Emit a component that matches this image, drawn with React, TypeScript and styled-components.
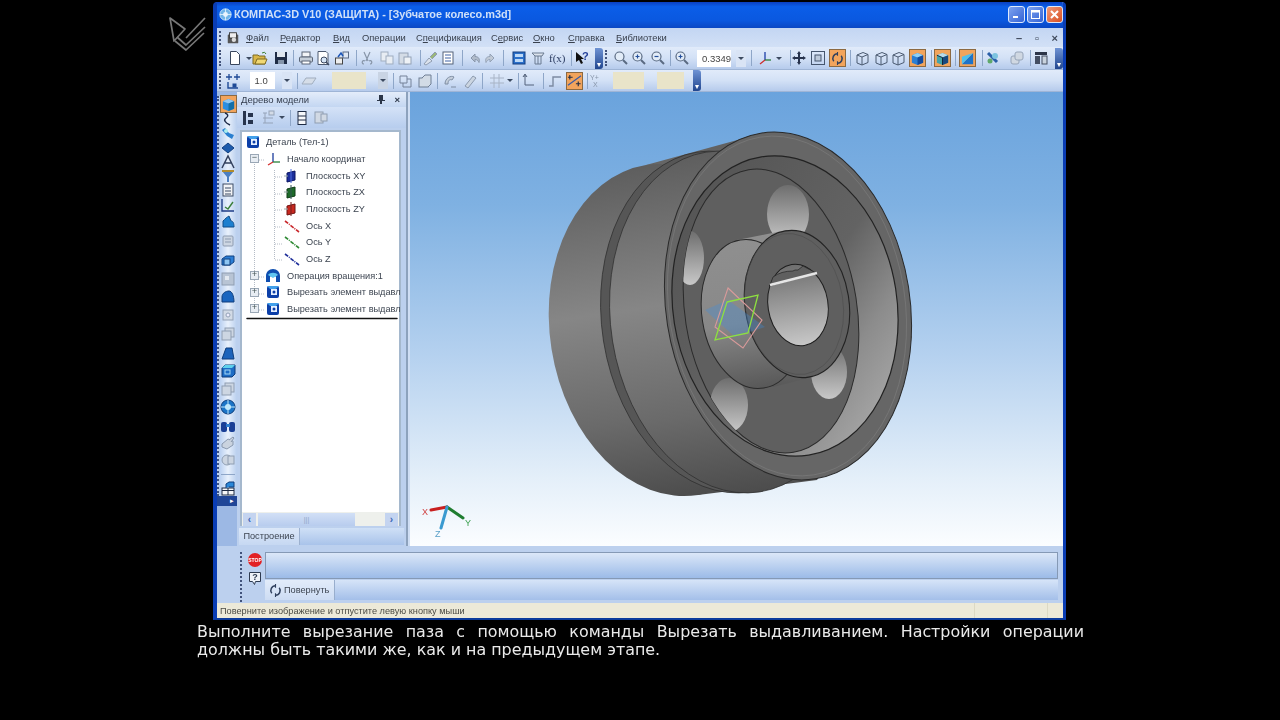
import React from 'react';
import styled, { createGlobalStyle } from 'styled-components';

const Global = createGlobalStyle`
  html, body { margin: 0; padding: 0; background: #000; overflow: hidden; }
  body { font-family: "Liberation Sans", Arial, sans-serif; }
  #root { width: 1280px; height: 720px; }
`;

const Stage = styled.div`width:1280px;height:720px;background:#000;display:flex;flex-direction:column;padding-top:2px;box-sizing:border-box;`;
const Top = styled.div`display:flex;height:618px;`;
const LogoBox = styled.div`width:213px;display:flex;justify-content:flex-end;align-items:flex-start;padding:12px 5px 0 0;box-sizing:border-box;filter:blur(.5px);`;
const Win = styled.div`width:853px;height:618px;display:flex;flex-direction:column;box-sizing:border-box;border-left:4px solid #0a3db4;border-right:3px solid #0a3db4;border-bottom:2px solid #0a3a9c;border-radius:4px 4px 0 0;overflow:hidden;background:#cfdef4;`;
const Title = styled.div`height:26px;margin:0 -3px 0 -4px;padding:0 3px 2px 6px;box-sizing:border-box;display:flex;align-items:center;background:linear-gradient(180deg,#0a3fc0 0%,#0b5ee8 18%,#0a58e0 70%,#0a47c4 100%);color:#cfe0f8;font:bold 10.9px "Liberation Sans",sans-serif;flex:none;filter:blur(.35px);`;
const TitleText = styled.span`margin-left:2px;flex:1;`;
const WinBtn = styled.div<{ $c: string }>`width:17px;height:17px;margin-left:2px;border-radius:3px;border:1px solid #dfe9fb;box-sizing:border-box;background:${p => p.$c};display:flex;align-items:center;justify-content:center;`;
const MenuBar = styled.div`height:19px;flex:none;display:flex;align-items:center;background:linear-gradient(180deg,#c3d6f3,#d2e0f6);color:#39414e;font-size:9.4px;filter:blur(.3px);`;
const Menu = styled.span<{ $w: number }>`width:${p => p.$w}px;flex:none;white-space:nowrap;`;
const MenuIcon = styled.div`width:29px;flex:none;display:flex;align-items:center;justify-content:flex-start;gap:3px;padding-left:2px;box-sizing:border-box;`;
const Mdi = styled.div`margin-left:auto;width:42px;display:flex;justify-content:space-between;padding-right:5px;font-size:11px;font-weight:bold;color:#3f4a5c;`;
const ToolRow = styled.div<{ $h: number }>`height:${p => p.$h}px;flex:none;display:flex;align-items:center;background:linear-gradient(180deg,#e1ebfa 0%,#d3e1f6 50%,#b6cbec 100%);border-bottom:1px solid #9fb5d6;box-sizing:border-box;`;
const Slot = styled.div<{ $w: number }>`width:${p => p.$w}px;flex:none;display:flex;align-items:center;justify-content:center;height:100%;filter:blur(.35px);`;
const Grip = styled.div`width:2px;height:16px;border-left:2px dotted #41527a;`;
const SmallGrip = styled.div`width:2px;height:14px;flex:none;border-left:2px dotted #41527a;`;
const Sep = styled.div`width:1px;height:16px;background:#8ea6c8;`;
const Orange = styled.div`width:17px;height:18px;background:#f2a45c;border:1px solid #8c6a42;box-sizing:border-box;display:flex;align-items:center;justify-content:center;`;
const Arrow = styled.div`width:0;height:0;border:3px solid transparent;border-top:3px solid #3c4a60;border-bottom:0;`;
const Handle = styled.div`width:8px;height:21px;background:linear-gradient(180deg,#6f93d4,#21468f);border-radius:0 3px 3px 0;display:flex;align-items:flex-end;justify-content:center;color:#fff;font-size:8px;line-height:9px;`;
const InputBox = styled.div<{ $w: number; $bg: string }>`width:${p => p.$w}px;height:17px;background:${p => p.$bg};font-size:9.5px;color:#444;display:flex;align-items:center;padding-left:5px;box-sizing:border-box;`;
const DropBtn = styled.div<{ $dim?: boolean }>`width:11px;height:17px;background:${p => (p.$dim ? '#c9d4e4' : '#d9e4f5')};display:flex;align-items:center;justify-content:center;`;

const Main = styled.div`height:454px;flex:none;display:flex;`;
const Strip = styled.div`width:20px;flex:none;display:flex;flex-direction:column;background:#9cb8e4;padding-top:4px;box-sizing:border-box;`;
const StripBody = styled.div`height:400px;background:linear-gradient(90deg,#b5cdf0,#e9f1fc 50%,#b9cfee);border-left:2px dotted #3e5180;box-sizing:border-box;display:flex;flex-direction:column;`;
const StripSlot = styled.div<{ $h: number }>`height:${p => p.$h}px;flex:none;display:flex;align-items:center;justify-content:center;filter:blur(.35px);`;
const StripSep = styled.div`width:14px;height:1px;background:#8ea6c8;`;
const StripHandle = styled.div`height:10px;background:#1f4597;color:#fff;font-size:7px;line-height:10px;text-align:right;padding-right:3px;`;
const Panel = styled.div`width:171px;flex:none;background:#bcd0ee;display:flex;flex-direction:column;border-right:2px solid #8da2bd;box-sizing:border-box;`;
const PanelHead = styled.div`height:15px;padding:0 6px 0 4px;flex:none;display:flex;align-items:center;justify-content:space-between;font-size:9.5px;color:#333d4e;background:linear-gradient(180deg,#e4edfa,#c3d6f2);filter:blur(.25px);`;
const HeadBtns = styled.div`display:flex;gap:9px;align-items:center;font-weight:bold;color:#2b3648;`;
const PanelTools = styled.div`height:21px;flex:none;display:flex;align-items:center;background:linear-gradient(180deg,#d4e2f7,#b7cdee);`;
const TreeFrame = styled.div`margin:2px 5px 0 3px;flex:none;height:396px;background:#fff;border:2px solid #a5b8cd;border-bottom:0;box-sizing:border-box;position:relative;display:flex;flex-direction:column;padding-top:2px;`;
const Guides = styled.svg`position:absolute;left:0;top:0;`;
const Row = styled.div<{ $pad: number }>`height:16.67px;flex:none;padding-left:${p => p.$pad}px;display:flex;align-items:center;font-size:9.2px;color:#3c4450;white-space:nowrap;position:relative;filter:blur(.25px);`;
const Exp = styled.div`width:9px;height:9px;flex:none;background:#e8edf3;border:1px solid #9aa7b5;box-sizing:border-box;color:#455;font:9px/6px "Liberation Mono",monospace;text-align:center;margin-right:6px;`;
const RowLabel = styled.span<{ $m: number }>`margin-left:${p => p.$m}px;`;
const TreeEnd = styled.svg`display:block;margin-left:2px;flex:none;`;
const Spacer = styled.div`flex:1;`;
const Scroll = styled.div`height:14px;flex:none;display:flex;align-items:center;background:#eef0ec;padding:0 1px;`;
const ScrollBtn = styled.div`width:13px;height:13px;background:#c4d4f0;color:#3a66b4;font:bold 10px/13px "Liberation Sans",sans-serif;text-align:center;`;
const Thumb = styled.div`width:97px;height:13px;margin-left:2px;background:linear-gradient(180deg,#d2e0f6,#b8ccee);color:#8ea4c6;font-size:7px;line-height:13px;text-align:center;`;
const TabRow = styled.div`flex:none;height:17px;margin:2px 2px 0 2px;display:flex;background:linear-gradient(180deg,#cfe0f6,#a9c3ea);`;
const Tab = styled.div`width:60px;background:linear-gradient(180deg,#dbe7f8,#c6d8f2);font-size:9.2px;color:#3c4450;line-height:16px;text-align:center;border-right:1px solid #9cb1d0;filter:blur(.2px);`;
const Canvas = styled.div`flex:1;position:relative;margin-left:2px;background:linear-gradient(180deg,#6aa3dd 0%,#7fb1e2 25%,#b5d1ef 58%,#e4eff9 85%,#fbfdff 100%);`;
const CanvasArt = styled.svg`position:absolute;inset:0;filter:blur(.4px);`;

const Command = styled.div`height:57px;flex:none;display:flex;background:#bcd0ee;padding:6px 5px 0 0;box-sizing:border-box;`;
const CmdLeft = styled.div`width:48px;flex:none;display:flex;`;
const CmdGrip = styled.div`width:2px;height:50px;border-left:2px dotted #41527a;margin-left:23px;flex:none;`;
const CmdSide = styled.div`flex:1;display:flex;flex-direction:column;align-items:center;gap:2px;filter:blur(.3px);`;
const CmdBody = styled.div`flex:1;display:flex;flex-direction:column;gap:1px;`;
const CmdField = styled.div`height:27px;flex:none;background:linear-gradient(180deg,#dbe7f8,#9cbbe8);border:1px solid #8599b5;box-sizing:border-box;`;
const CmdTabs = styled.div`height:20px;flex:none;display:flex;background:linear-gradient(180deg,#d6e4f8,#a4bfe9);`;
const CmdTab = styled.div`width:70px;display:flex;align-items:center;gap:1px;padding-left:3px;box-sizing:border-box;background:linear-gradient(180deg,#e2ecfa,#cddcf3);border-right:1px solid #98aecd;font-size:9.2px;color:#3c4450;filter:blur(.2px);`;
const Status = styled.div`height:15px;flex:none;display:flex;align-items:center;background:#ece9d8;font-size:9.2px;color:#4a4a44;padding-left:3px;filter:blur(.2px);`;
const StatusText = styled.span`flex:1;`;
const StatusCell = styled.div<{ $w: number }>`width:${p => p.$w}px;height:100%;border-left:1px solid #dcd9c4;flex:none;`;
const Caption = styled.div`margin:3px 0 0 197px;width:887px;font:15.9px/18px "DejaVu Sans",sans-serif;color:#eaeaea;filter:blur(.3px);`;
const CapLine = styled.div<{ $last?: boolean }>`height:18px;text-align:${p => (p.$last ? 'left' : 'justify')};text-align-last:${p => (p.$last ? 'left' : 'justify')};white-space:${p => (p.$last ? 'nowrap' : 'normal')};`;
const Svg = styled.svg`display:block;flex:none;`;

const cube = (a: string, b: string, c: string) => (
  <>
    <path d="M8 2l6 2.5v8L8 15 2 12.5v-8z" fill={b} />
    <path d="M8 2l6 2.5L8 7 2 4.5z" fill={a} />
    <path d="M8 7l6-2.5v8L8 15z" fill={c} />
  </>
);
const wire = <g fill="none" stroke="#4b5a70"><path d="M3 5l6-2.5 5 2v8L8 15l-5-2z" /><path d="M3 5l5 2 6-2.5M8 7v8" /></g>;
const dim = <g fill="#cdd6e2" stroke="#8d9bb0"><rect x="3" y="3" width="10" height="10" rx="1" /><path d="M5 6h6M5 9h6" fill="none" /></g>;
const part = <g><rect x="2" y="2" width="12" height="12" rx="2" fill="#0c3fa8" /><rect x="6" y="5" width="6" height="6" fill="#e6f0ff" /><circle cx="9" cy="8" r="1.5" fill="#0c3fa8" /><path d="M2 2h12L11 5H5z" fill="#42a0ea" /></g>;
const I: Record<string, React.ReactNode> = {
  menu: <g><rect x="2" y="4" width="12" height="10" rx="1" fill="#555" /><rect x="4" y="2" width="8" height="6" fill="#eee" stroke="#333" /><circle cx="9" cy="10" r="2.5" fill="#ddd" /></g>,
  doc: <path d="M3.5 1.5h6l3 3v10h-9z" fill="#fff" stroke="#39465c" />,
  open: <g><path d="M1 5h5l1 1h6v8H1z" fill="#d9b648" stroke="#7d6a22" /><path d="M3 14l2-5h10l-2 5z" fill="#f1d873" stroke="#7d6a22" /><path d="M10 3q3-2 4 1" stroke="#3a7e2f" fill="none" /></g>,
  save: <g><rect x="2" y="2" width="12" height="12" fill="#1f2c46" /><rect x="4" y="2" width="8" height="5" fill="#dfe6ef" /><rect x="5" y="10" width="6" height="4" fill="#8595ab" /></g>,
  print: <g fill="#c5ced9" stroke="#5a6576"><rect x="4" y="2" width="8" height="5" fill="#f2f4f7" /><rect x="1.5" y="7" width="13" height="5" rx="1" /><rect x="4" y="11" width="8" height="3" fill="#fff" /></g>,
  prev: <g><path d="M3 1.5h8l2 2v11H3z" fill="#fff" stroke="#4d5a70" /><circle cx="9" cy="10" r="3" fill="#d4e4f6" stroke="#3e4a60" /><path d="M11 12l3 3" stroke="#3e4a60" strokeWidth="1.5" /></g>,
  load: <g><rect x="1.5" y="8" width="7" height="6" fill="#eee" stroke="#444" /><rect x="9" y="2" width="5.5" height="6" fill="#dfe8f5" stroke="#5a6b86" /><path d="M4 7l3-4 2 3" stroke="#1c55b6" strokeWidth="1.5" fill="none" /></g>,
  cut: <path d="M5 2l4 9M11 2L7 11M5 14a1.7 1.7 0 1 1 1-3M11 14a1.7 1.7 0 1 0-1-3" fill="none" stroke="#8795a8" strokeWidth="1.2" />,
  copy: <g fill="#e8edf3" stroke="#9fadc0"><rect x="2" y="2" width="7" height="9" /><rect x="7" y="6" width="7" height="8" /></g>,
  paste: <g fill="#d4dce6" stroke="#94a2b6"><rect x="2" y="3" width="9" height="11" /><rect x="7" y="7" width="7" height="7" fill="#eef2f6" /></g>,
  brush: <g stroke="#8f9cb0" fill="#dbe2ec"><path d="M2 14l5-6 3 3-6 4z" /><path d="M8 7l5-5 2 2-5 5" fill="#9bb77a" /></g>,
  list: <g><rect x="3" y="2" width="10" height="12" fill="#fff" stroke="#55637a" /><path d="M5 5h6M5 8h6M5 11h6" stroke="#3e63a5" /></g>,
  undo: <path d="M4 8l4-4v2.5c4 0 5 3 4 6-1-2-2-3-4-3V12z" fill="#b1bccb" stroke="#8896aa" />,
  redo: <path d="M12 8L8 4v2.5c-4 0-5 3-4 6 1-2 2-3 4-3V12z" fill="#c1cad6" stroke="#94a2b6" />,
  blue: <g><rect x="2" y="2" width="12" height="12" fill="#2a6fc9" stroke="#153f80" /><rect x="4" y="4" width="8" height="3" fill="#bcd8f6" /><rect x="4" y="9" width="8" height="3" fill="#bcd8f6" /></g>,
  box: <g fill="none" stroke="#6a7a90"><path d="M2 3h12l-2 3H5z" fill="#dce4ee" /><path d="M5 6v8h6V6" /><path d="M8 6v8" /></g>,
  fx: <text x="0" y="12" fontSize="11" fill="#2a3a60" fontFamily="Liberation Serif">f(x)</text>,
  help: <g><path d="M2 2v10l3-2 2 4 2-1-2-4h3z" fill="#111" /><text x="8" y="10" fontSize="11" fontWeight="bold" fill="#24409a">?</text></g>,
  zoomA: <g fill="none" stroke="#5a6a82" strokeWidth="1.2"><circle cx="6.5" cy="6.5" r="4.5" fill="#e2ecf8" /><path d="M10 10l4 4" strokeWidth="2" /></g>,
  zoomP: <g fill="none" stroke="#5a6a82" strokeWidth="1.2"><circle cx="6.5" cy="6.5" r="4.5" fill="#e2ecf8" /><path d="M10 10l4 4" strokeWidth="2" /><path d="M4.5 6.5h4M6.5 4.5v4" stroke="#25509c" /></g>,
  zoomM: <g fill="none" stroke="#5a6a82" strokeWidth="1.2"><circle cx="6.5" cy="6.5" r="4.5" fill="#e2ecf8" /><path d="M10 10l4 4" strokeWidth="2" /><path d="M4.5 6.5h4" stroke="#25509c" /></g>,
  axes: <g fill="none" strokeWidth="1.3"><path d="M8 2v8" stroke="#1d3fa8" /><path d="M8 10h6" stroke="#2a7d38" /><path d="M8 10l-5 4" stroke="#cc2b2b" /></g>,
  move: <path d="M8 1l2 3H9v3h3V6l3 2-3 2V9H9v3h1l-2 3-2-3h1V9H4v1L1 8l3-2v1h3V4H6z" fill="#26324c" />,
  frame: <g fill="none" stroke="#46566e"><rect x="1.5" y="1.5" width="13" height="13" /><rect x="5" y="5" width="6" height="6" fill="#bcc9da" /></g>,
  rot: <g fill="none" stroke="#30405e" strokeWidth="1.6"><path d="M4 11A5 5 0 0 1 8 3" /><path d="M12 5a5 5 0 0 1-4 8" /><path d="M8 1v4M8 11v4" strokeWidth="1.2" /></g>,
  wire,
  solid: cube('#8fd0f5', '#2b7fd4', '#144a9c'),
  solid2: <g>{cube('#b9d9ea', '#45a3a8', '#19487e')}<path d="M2 4.5L8 7v8" fill="none" stroke="#123" /></g>,
  wedge: <g><path d="M2 14L14 2v12z" fill="#1e73c9" /><path d="M2 14V6l12-4z" fill="#4fc0ee" /></g>,
  sat: <g><path d="M3 3l9 9" stroke="#2a5fa8" strokeWidth="3" /><circle cx="10" cy="6" r="3" fill="#7cc3df" /><circle cx="5" cy="11" r="2.5" fill="#5fa86b" /></g>,
  gr: <g fill="#d0d8e2" stroke="#96a4b8"><rect x="2" y="6" width="8" height="8" rx="2" /><rect x="6" y="2" width="8" height="8" rx="2" /></g>,
  lib: <g><rect x="2" y="2" width="12" height="3" fill="#2c3548" /><rect x="2" y="6" width="5" height="8" fill="#444e62" /><rect x="9" y="6" width="5" height="8" fill="#c9d3de" stroke="#444e62" /></g>,
  scale: <g stroke="#1f4a96" fill="#1f4a96"><path d="M4 1v6M12 1v6M1 4h6M9 4h6" fill="none" strokeWidth="1.3" /><path d="M3 9v6h10" fill="none" strokeWidth="1.4" /><rect x="8" y="11" width="3" height="3" /></g>,
  plane: <g fill="none" stroke="#a0adbe"><path d="M1 11l4-6h10l-4 6z" fill="#d5dde8" /></g>,
  snapA: <g fill="none" stroke="#748299"><path d="M3 3h7v7H3zM10 6h4v8H6v-4" /></g>,
  snapB: <g fill="#d2dbe6" stroke="#6f7e94"><rect x="2" y="5" width="9" height="9" /><path d="M5 5l3-3h6v9l-3 3" /></g>,
  pen: <g fill="#c4cedb" stroke="#7e8da2"><path d="M3 11c0-6 6-9 9-7l-2 3c-2-1-4 0-4 4z" /><path d="M9 14h5" /></g>,
  pen2: <g fill="#cbd5e1" stroke="#8b99ad"><path d="M3 13L11 3l3 2-8 10z" /></g>,
  grid: <path d="M1 5h14M1 10h14M5 1v14M10 1v14" stroke="#a8b4c6" fill="none" />,
  axis2: <g stroke="#54637c" fill="none"><path d="M5 2v10h9" /><path d="M3 4l2-3 2 3" fill="#7f8da3" /></g>,
  step: <path d="M2 13h4V4h8" fill="none" stroke="#7d8ba2" strokeWidth="1.4" />,
  plus: <g stroke="#222d44" strokeWidth="1.2" fill="none"><path d="M1 13L15 3" stroke="#355aa8" /><path d="M3 2v5M1 4.5h5M12 9v5M9.5 11.5h5" /></g>,
  yx: <g fill="#8896aa" fontFamily="Liberation Sans" fontSize="7"><text x="1" y="7">Y+</text><text x="4" y="14">X</text></g>,
  sCube: <g>{cube('#8fc7f2', '#2a8ee0', '#126fa8')}</g>,
  curve: <path d="M5 2q5 2 1 5t4 7" fill="none" stroke="#1e2b4a" strokeWidth="1.5" />,
  sat2: <g><path d="M2 5l3-2 4 5 5 2-2 4-5-3z" fill="#2a7fd0" /><circle cx="6" cy="6" r="2" fill="#aee" /></g>,
  dia: <path d="M8 3l6 5-6 5-6-5z" fill="#1d5cad" stroke="#123f80" />,
  arch: <path d="M2 14L8 2l6 12M5 9h6" fill="none" stroke="#33415e" strokeWidth="1.5" />,
  funnel: <g><path d="M2 3h12L9 9v5L7 14V9z" fill="#4b7fc2" /><rect x="2" y="2" width="12" height="2" fill="#b28c2e" /></g>,
  page: <g><rect x="3" y="2" width="10" height="12" fill="#f2f3f5" stroke="#3d4c66" /><path d="M5 6h6M5 9h6M5 12h6" stroke="#3d4c66" /></g>,
  chk: <g stroke="#1f3d86" fill="none" strokeWidth="1.4"><path d="M2 2v12h12" /><path d="M5 10l3 2 5-7" stroke="#3a7f3a" /></g>,
  shell: <path d="M3 13V7c2-2 4-4 6-5l2 5c2 0 3 2 3 6z" fill="#1d7fcf" stroke="#114c88" />,
  dim,
  ex: <g><path d="M2 12V6l4-3h8v6l-4 3z" fill="#2b7ed6" stroke="#10407f" /><rect x="4" y="6" width="6" height="6" fill="#8ec6f3" stroke="#10407f" /></g>,
  dim2: <g><rect x="2" y="2" width="12" height="12" fill="#b8c4d4" stroke="#8f9eb2" /><rect x="5" y="5" width="4" height="4" fill="#e3e9f0" /></g>,
  dome: <g><path d="M2 13V8c0-4 4-6 7-6s5 5 5 11z" fill="#1a65bf" stroke="#0e3d7c" /></g>,
  dim3: <g><rect x="3" y="3" width="10" height="10" fill="#d3dbe6" stroke="#93a1b6" /><circle cx="8" cy="8" r="2" fill="#eef" stroke="#93a1b6" /></g>,
  dim4: <g fill="#cdd6e2" stroke="#8f9eb2"><rect x="5" y="2" width="9" height="9" /><rect x="2" y="5" width="9" height="9" /></g>,
  wedge2: <path d="M2 14l4-11h6l2 11z" fill="#1c63bb" stroke="#0e3d7c" />,
  ex2: <g><path d="M2 5l3-3h10v9l-3 3H2z" fill="#1d6cc5" stroke="#0d3b78" /><path d="M5 2h10l-3 3H2z" fill="#5fd0ec" /><rect x="5" y="7" width="5" height="4" fill="none" stroke="#a4d8f6" /></g>,
  globe: <g><circle cx="8" cy="8" r="7" fill="#1b74c7" stroke="#0e3d7c" /><circle cx="8" cy="8" r="3" fill="#bfe7fb" /><path d="M8 1v14M1 8h14" stroke="#bfe7fb" /></g>,
  logoK: <g><circle cx="8" cy="8" r="7" fill="#6fb4e8" stroke="#d7ecfb" /><circle cx="8" cy="8" r="3" fill="#e8f4fd" /><path d="M8 1v14M1 8h14" stroke="#e8f4fd" /></g>,
  bino: <g fill="#1a3f96"><rect x="1" y="4" width="6" height="10" rx="2" /><rect x="9" y="4" width="6" height="10" rx="2" /><rect x="6" y="6" width="4" height="3" fill="#2d7ed0" /></g>,
  pen3: <g fill="#cad3df" stroke="#8998ae"><path d="M2 9l6-5 5 2v4l-6 4-5-2z" /><path d="M9 5l4-3 1 1-3 4" /></g>,
  dim5: <g fill="#ccd5e1" stroke="#8f9eb2"><circle cx="7" cy="8" r="5" /><rect x="8" y="4" width="6" height="8" /></g>,
  tree: <g><rect x="2" y="7" width="12" height="7" fill="#f6f7f9" stroke="#1d2a44" /><path d="M2 9.5h12M8 7v7" stroke="#1d2a44" /><path d="M6 7V3l3-2h5v5H9" fill="#2a87d8" stroke="#0e3d7c" /></g>,
  tr: <g fill="#27344d"><rect x="3" y="1" width="3" height="14" /><rect x="8" y="3" width="5" height="4" /><rect x="8" y="10" width="5" height="4" /></g>,
  tr2: <g fill="none" stroke="#95a3b8"><path d="M3 3h4M3 8h10M3 13h10M5 3v10" /><rect x="9" y="1" width="5" height="4" fill="#d3dbe6" /></g>,
  col: <g><rect x="4" y="1.5" width="8" height="13" fill="#f6f8fb" stroke="#1e2b44" /><path d="M4 6h8M4 10h8" stroke="#1e2b44" /></g>,
  col2: <g fill="#d1d9e4" stroke="#8f9eb2"><rect x="2" y="2" width="8" height="11" /><rect x="8" y="4" width="6" height="7" /></g>,
  t0: part,
  origin: <g fill="none" strokeWidth="1.3"><path d="M8 2v9" stroke="#1b3c9c" /><path d="M8 11h7" stroke="#27803a" /><path d="M8 11l-5 3" stroke="#d22b2b" /></g>,
  pXY: <g><path d="M3 5l8-2v9l-8 2z" fill="#1c2f9c" stroke="#0a1460" /><path d="M7 1v14" stroke="#4d6de0" /><path d="M0 8h4" stroke="#9aa" /></g>,
  pZX: <g><path d="M3 5l8-2v9l-8 2z" fill="#1e6a2a" stroke="#0e3c14" /><path d="M7 1v14" stroke="#355" /><path d="M0 8h4" stroke="#9aa" /></g>,
  pZY: <g><path d="M3 5l8-2v9l-8 2z" fill="#c8281f" stroke="#701310" /><path d="M7 1v14" stroke="#722" /><path d="M0 8h4" stroke="#9aa" /></g>,
  aX: <path d="M1 3l14 11" stroke="#c9282c" strokeWidth="1.6" strokeDasharray="4 1 1 1" />,
  aY: <path d="M1 3l14 11" stroke="#2f8a34" strokeWidth="1.6" strokeDasharray="4 1 1 1" />,
  aZ: <path d="M1 3l14 11" stroke="#1f2f9a" strokeWidth="1.6" strokeDasharray="4 1 1 1" />,
  rev: <g><path d="M1 14V8c0-4 3-7 7-7s7 3 7 7v6h-4V9c-1-2-5-2-6 0v5z" fill="#0f4fb0" /><path d="M3 7c2-3 8-3 10 0l-5 3z" fill="#5fc6f0" /></g>,
  stop: <g><circle cx="8" cy="8" r="7" fill="#e22124" /><text x="8" y="10" fontSize="5" fontWeight="bold" fill="#fff" textAnchor="middle" fontFamily="Liberation Sans">STOP</text></g>,
  q: <g><path d="M2.5 2.5h11v9h-5l-1 3-2-3h-3z" fill="#eef2f8" stroke="#2d3a50" /><text x="8" y="10" fontSize="9" fontWeight="bold" fill="#2d3a50" textAnchor="middle">?</text></g>,
};
const Icon = ({ k, s = 16 }: { k: string; s?: number }) => <Svg width={s} height={s} viewBox="0 0 16 16">{I[k]}</Svg>;

type It = { x: number; el: React.ReactNode };
const ic = (x: number, k: string): It => ({ x, el: <Icon k={k} /> });
const or = (x: number, k: string): It => ({ x, el: <Orange><Icon k={k} s={15} /></Orange> });
const se = (x: number): It => ({ x, el: <Sep /> });
const ar = (x: number): It => ({ x, el: <Arrow /> });
const gr = (x: number): It => ({ x, el: <Grip /> });
const hd = (x: number): It => ({ x, el: <Handle>▾</Handle> });
const Bar = ({ items, start, end }: { items: It[]; start: number; end: number }) => (
  <>
    {items.map((it, i) => {
      const l = i === 0 ? start : (items[i - 1].x + it.x) / 2;
      const r = i === items.length - 1 ? end : (it.x + items[i + 1].x) / 2;
      const half = Math.min(it.x - l, r - it.x);
      return (
        <React.Fragment key={i}>
          {it.x - half > l ? <Slot $w={it.x - half - l} /> : null}
          <Slot $w={half * 2}>{it.el}</Slot>
          {it.x + half < r ? <Slot $w={r - it.x - half} /> : null}
        </React.Fragment>
      );
    })}
  </>
);

const row1: It[] = [gr(221), ic(235, 'doc'), ar(249), ic(260, 'open'), ic(281, 'save'), se(293), ic(306, 'print'), ic(323, 'prev'), ic(342, 'load'), se(356), ic(367, 'cut'), ic(387, 'copy'), ic(405, 'paste'), se(420), ic(430, 'brush'), ic(448, 'list'), se(462), ic(475, 'undo'), ic(490, 'redo'), se(503), ic(519, 'blue'), ic(538, 'box'), ic(557, 'fx'), se(571), ic(582, 'help'), hd(599), gr(607), ic(621, 'zoomA'), ic(639, 'zoomP'), ic(658, 'zoomM'), se(670), ic(682, 'zoomP'), { x: 714, el: <InputBox $w={42} $bg="#fff">0.3349</InputBox> }, { x: 741, el: <DropBtn><Arrow /></DropBtn> }, se(751), ic(765, 'axes'), ar(779), se(790), ic(799, 'move'), ic(818, 'frame'), or(837, 'rot'), se(850), ic(862, 'wire'), ic(881, 'wire'), ic(898, 'wire'), or(917, 'solid'), se(931), or(942, 'solid2'), se(955), or(967, 'wedge'), se(982), ic(993, 'sat'), ic(1017, 'gr'), se(1030), ic(1041, 'lib'), hd(1059)];
const row2: It[] = [gr(221), ic(233, 'scale'), { x: 262, el: <InputBox $w={36} $bg="#fff">1.0</InputBox> }, { x: 287, el: <DropBtn><Arrow /></DropBtn> }, se(297), ic(309, 'plane'), { x: 349, el: <InputBox $w={57} $bg="#e9e4c9" /> }, { x: 383, el: <DropBtn $dim><Arrow /></DropBtn> }, se(393), ic(405, 'snapA'), ic(425, 'snapB'), se(437), ic(450, 'pen'), ic(470, 'pen2'), se(482), ic(497, 'grid'), ar(510), se(518), ic(528, 'axis2'), se(543), ic(555, 'step'), or(574, 'plus'), se(587), ic(597, 'yx'), { x: 628, el: <InputBox $w={41} $bg="#e9e4c9" /> }, { x: 670, el: <InputBox $w={41} $bg="#e9e4c9" /> }, hd(697)];

const stripItems: { y: number; el: React.ReactNode }[] = [
  { y: 105, el: <Orange><Icon k="sCube" s={15} /></Orange> },
  ...([[119, 'curve'], [133, 'sat2'], [148, 'dia'], [162, 'arch'], [176, 'funnel'], [190, 'page'], [205, 'chk'], [219, 'shell'], [243, 'dim'], [260, 'ex'], [279, 'dim2'], [297, 'dome'], [315, 'dim3'], [333, 'dim4'], [353, 'wedge2'], [371, 'ex2'], [388, 'dim4'], [407, 'globe'], [426, 'bino'], [443, 'pen3'], [461, 'dim5']] as [number, string][]).map(([y, k]) => ({ y, el: <Icon k={k} /> })),
  { y: 474, el: <StripSep /> },
  { y: 488, el: <Icon k="tree" /> },
];

const panelTools: It[] = [ic(248, 'tr'), ic(268, 'tr2'), ar(282), se(290), ic(302, 'col'), ic(321, 'col2')];

const rows: { p: number; exp?: string; k: string; m: number; t: string }[] = [
  { p: 3, k: 't0', m: 5, t: 'Деталь (Тел-1)' },
  { p: 8, exp: '−', k: 'origin', m: 6, t: 'Начало координат' },
  { p: 42, k: 'pXY', m: 6, t: 'Плоскость XY' },
  { p: 42, k: 'pZX', m: 6, t: 'Плоскость ZX' },
  { p: 42, k: 'pZY', m: 6, t: 'Плоскость ZY' },
  { p: 42, k: 'aX', m: 6, t: 'Ось X' },
  { p: 42, k: 'aY', m: 6, t: 'Ось Y' },
  { p: 42, k: 'aZ', m: 6, t: 'Ось Z' },
  { p: 8, exp: '+', k: 'rev', m: 6, t: 'Операция вращения:1' },
  { p: 8, exp: '+', k: 't0', m: 6, t: 'Вырезать элемент выдавл' },
  { p: 8, exp: '+', k: 't0', m: 6, t: 'Вырезать элемент выдавл' },
];

const Wheel = () => (
  <CanvasArt width={653} height={454} viewBox="410 92 653 454">
    <defs>
      <linearGradient id="body" x1="0" y1="0" x2="0" y2="1"><stop offset="0" stopColor="#5e5e5e" /><stop offset=".42" stopColor="#868686" /><stop offset=".75" stopColor="#6a6a6a" /><stop offset="1" stopColor="#4c4c4c" /></linearGradient>
      <linearGradient id="wall" x1=".2" y1="0" x2=".9" y2=".9"><stop offset="0" stopColor="#545454" /><stop offset=".55" stopColor="#636363" /><stop offset=".78" stopColor="#8c8c8c" /><stop offset="1" stopColor="#a8a8a8" /></linearGradient>
      <linearGradient id="hole" x1="0" y1="0" x2="0" y2="1"><stop offset="0" stopColor="#6e6e6e" /><stop offset="1" stopColor="#c8c8c8" /></linearGradient>
      <linearGradient id="hub" x1="0" y1="0" x2="0" y2="1"><stop offset="0" stopColor="#8f8f8f" /><stop offset=".55" stopColor="#888" /><stop offset="1" stopColor="#585858" /></linearGradient>
      <clipPath id="webClip"><ellipse cx="771" cy="311" rx="86" ry="143" transform="rotate(-9 771 311)" /></clipPath>
    </defs>
    <path d="M646 165L763 133 912 337 817 480 698 495Z" fill="url(#body)" />
    <ellipse cx="672" cy="330" rx="122" ry="167" transform="rotate(-9 672 330)" fill="url(#body)" />
    <ellipse cx="724" cy="322" rx="122" ry="172" transform="rotate(-9 724 322)" fill="#565656" stroke="#2c2c2c" strokeWidth=".7" />
    <ellipse cx="733" cy="322" rx="122" ry="172" transform="rotate(-9 733 322)" fill="url(#body)" stroke="#2c2c2c" strokeWidth=".7" />
    <ellipse cx="788" cy="306" rx="122" ry="175" transform="rotate(-9 788 306)" fill="#666" stroke="#2a2a2a" strokeWidth="1" />
    <ellipse cx="787" cy="306" rx="118" ry="171" transform="rotate(-9 787 306)" fill="none" stroke="#7a7a7a" strokeWidth=".7" />
    <ellipse cx="785" cy="306" rx="112" ry="151" transform="rotate(-9 785 306)" fill="url(#wall)" stroke="#222" strokeWidth="1.2" />
    <ellipse cx="771" cy="311" rx="86" ry="143" transform="rotate(-9 771 311)" fill="#5f5f5f" stroke="#2a2a2a" strokeWidth="1" />
    <g clipPath="url(#webClip)">
      <ellipse cx="788" cy="214" rx="21" ry="29" fill="url(#hole)" />
      <ellipse cx="690" cy="258" rx="14" ry="27" fill="url(#hole)" />
      <ellipse cx="729" cy="405" rx="19" ry="27" fill="url(#hole)" />
      <ellipse cx="829" cy="372" rx="18" ry="27" fill="url(#hole)" />
    </g>
    <path d="M737 240L787 230 813 377 773 387Z" fill="url(#hub)" />
    <ellipse cx="752" cy="314" rx="50" ry="75" transform="rotate(-9 752 314)" fill="url(#hub)" stroke="#2a2a2a" strokeWidth="1" />
    <ellipse cx="797" cy="304" rx="52" ry="74" transform="rotate(-9 797 304)" fill="#5f5f5f" stroke="#222" strokeWidth="1.1" />
    <ellipse cx="794" cy="304" rx="49" ry="71" transform="rotate(-9 794 304)" fill="none" stroke="#4a4a4a" strokeWidth=".5" />
    <ellipse cx="798" cy="305" rx="30" ry="41" transform="rotate(-9 798 305)" fill="url(#hole)" stroke="#1e1e1e" strokeWidth="1" />
    <path d="M770 285l3-8q8-6 20-6l2-1 3 0 5-4 13 7-47 13z" fill="#5f5f5f" stroke="#222" strokeWidth=".7" />
    <path d="M770 285L817 273" stroke="#e6e6e6" strokeWidth="2.4" />
    <g fill="none" strokeWidth="1.1">
      <path d="M705 310L728 300 765 327 735 337Z" fill="#3f8fe0" fillOpacity=".32" stroke="none" />
      <path d="M728 288L762 320 743 348 715 327Z" stroke="#d89a9a" />
      <path d="M727 302L758 295 748 333 715 340Z" stroke="#8ee040" strokeWidth="1.3" />
    </g>
    <g strokeWidth="3" strokeLinecap="round">
      <path d="M447 507L431 510" stroke="#c81f1f" />
      <path d="M447 507L463 518" stroke="#1f7d30" />
      <path d="M447 507L441 528" stroke="#3a9ad0" />
    </g>
    <g fontFamily="Liberation Sans" fontSize="9">
      <text x="422" y="515" fill="#d04040">X</text>
      <text x="465" y="526" fill="#3ca050">Y</text>
      <text x="435" y="537" fill="#5aa0c8">Z</text>
    </g>
  </CanvasArt>
);

export default function App() {
  return (
    <Stage>
      <Global />
      <Top>
        <LogoBox>
          <svg width="43" height="40" viewBox="165 14 43 40" fill="none" stroke="#777" strokeWidth="1.7" strokeLinejoin="round">
            <path d="M170 18L185 29 174 41Z" />
            <path d="M186 38L205 18M177 37L186 45 205 27M175 41L186 50 204 33" />
          </svg>
        </LogoBox>
        <Win>
          <Title>
            <Icon k="logoK" s={13} />
            <TitleText>КОМПАС-3D V10 (ЗАЩИТА) - [Зубчатое колесо.m3d]</TitleText>
            <WinBtn $c="linear-gradient(135deg,#7ea2ee,#3463d6)"><svg width="9" height="9"><rect x="1" y="6" width="5" height="2" fill="#fff" /></svg></WinBtn>
            <WinBtn $c="linear-gradient(135deg,#7ea2ee,#3463d6)"><svg width="11" height="11" fill="none" stroke="#fff"><rect x="1.5" y="1.5" width="8" height="8" /><path d="M1 2.5h9" strokeWidth="2" /></svg></WinBtn>
            <WinBtn $c="linear-gradient(135deg,#f09a78,#d84e22)"><svg width="11" height="11" stroke="#fff" strokeWidth="2"><path d="M2 2l7 7M9 2l-7 7" /></svg></WinBtn>
          </Title>
          <MenuBar>
            <MenuIcon><SmallGrip /><Icon k="menu" s={14} /></MenuIcon>
            <Menu $w={34}><u>Ф</u>айл</Menu>
            <Menu $w={53}><u>Р</u>едактор</Menu>
            <Menu $w={29}><u>В</u>ид</Menu>
            <Menu $w={54}>Операции</Menu>
            <Menu $w={75}>С<u>п</u>ецификация</Menu>
            <Menu $w={42}>С<u>е</u>рвис</Menu>
            <Menu $w={35}><u>О</u>кно</Menu>
            <Menu $w={48}><u>С</u>правка</Menu>
            <Menu $w={60}><u>Б</u>иблиотеки</Menu>
            <Mdi><span>–</span><span>▫</span><span>×</span></Mdi>
          </MenuBar>
          <ToolRow $h={23}><Bar items={row1} start={217} end={1063} /></ToolRow>
          <ToolRow $h={22}><Bar items={row2} start={217} end={705} /></ToolRow>
          <Main>
            <Strip>
              <StripBody>
                {stripItems.map((s, i) => {
                  const top = i === 0 ? 96 : (stripItems[i - 1].y + s.y) / 2;
                  const bot = i === stripItems.length - 1 ? 496 : (s.y + stripItems[i + 1].y) / 2;
                  return <StripSlot key={i} $h={bot - top}>{s.el}</StripSlot>;
                })}
              </StripBody>
              <StripHandle>▸</StripHandle>
            </Strip>
            <Panel>
              <PanelHead>
                <span>Дерево модели</span>
                <HeadBtns><svg width="8" height="9" fill="#2b3648"><path d="M2 0h4v5h2v1H5v3H3V6H0V5h2z" /></svg><span>×</span></HeadBtns>
              </PanelHead>
              <PanelTools><Bar items={panelTools} start={237} end={340} /></PanelTools>
              <TreeFrame>
                <Guides width="160" height="200">
                  <g stroke="#b5bcc6" strokeDasharray="1 1" fill="none">
                    <path d="M12.5 24V180M32.5 38V128M33 45h8M33 62h8M33 78h8M33 95h8M33 112h8M33 128h8M17 28h6M17 145h6M17 162h6M17 178h6" />
                  </g>
                </Guides>
                {rows.map((r, i) => (
                  <Row key={i} $pad={r.p}>
                    {r.exp ? <Exp>{r.exp}</Exp> : null}
                    <Icon k={r.k} />
                    <RowLabel $m={r.m}>{r.t}</RowLabel>
                  </Row>
                ))}
                <TreeEnd width="160" height="4"><path d="M3 1.5H153" stroke="#111" strokeWidth="1.5" strokeLinecap="round" /></TreeEnd>
                <Spacer />
                <Scroll>
                  <ScrollBtn>‹</ScrollBtn>
                  <Thumb>|||</Thumb>
                  <Spacer />
                  <ScrollBtn>›</ScrollBtn>
                </Scroll>
              </TreeFrame>
              <TabRow><Tab>Построение</Tab></TabRow>
            </Panel>
            <Canvas><Wheel /></Canvas>
          </Main>
          <Command>
            <CmdLeft>
              <CmdGrip />
              <CmdSide>
                <Icon k="stop" />
                <Icon k="q" />
              </CmdSide>
            </CmdLeft>
            <CmdBody>
              <CmdField />
              <CmdTabs>
                <CmdTab><Icon k="rot" s={15} />Повернуть</CmdTab>
              </CmdTabs>
            </CmdBody>
          </Command>
          <Status>
            <StatusText>Поверните изображение и отпустите левую кнопку мыши</StatusText>
            <StatusCell $w={72} />
            <StatusCell $w={15} />
          </Status>
        </Win>
      </Top>
      <Caption>
        <CapLine>Выполните вырезание паза с помощью команды Вырезать выдавливанием. Настройки операции</CapLine>
        <CapLine $last>должны быть такими же, как и на предыдущем этапе.</CapLine>
      </Caption>
    </Stage>
  );
}
